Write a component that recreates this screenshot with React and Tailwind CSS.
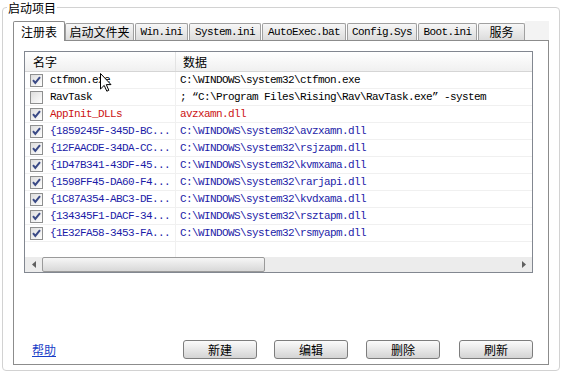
import React from 'react';

const mono = "font-['Liberation_Mono','Noto_Sans_CJK_SC',monospace] text-[11px] tracking-[-0.6px]";
const cjk = "font-['Noto_Sans_CJK_SC','Noto_Sans',sans-serif] text-[12px]";

const tabs = [
  { label: '注册表', w: 'w-[52px]', zh: true, active: true },
  { label: '启动文件夹', w: 'w-[69px]', zh: true },
  { label: 'Win.ini', w: 'w-[53px]' },
  { label: 'System.ini', w: 'w-[72px]' },
  { label: 'AutoExec.bat', w: 'w-[84px]' },
  { label: 'Config.Sys', w: 'w-[70px]' },
  { label: 'Boot.ini', w: 'w-[59px]' },
  { label: '服务', w: 'w-[47px]', zh: true },
];

const BLUE = 'text-[#1c1ca8]';
const RED = 'text-[#cc1414]';

const rows = [
  { on: true, name: 'ctfmon.exe', data: 'C:\\WINDOWS\\system32\\ctfmon.exe', color: 'text-black' },
  { on: false, name: 'RavTask', data: '; “C:\\Program Files\\Rising\\Rav\\RavTask.exe” -system', color: 'text-black' },
  { on: true, name: 'AppInit_DLLs', data: 'avzxamn.dll', color: RED },
  { on: true, name: '{1859245F-345D-BC...', data: 'C:\\WINDOWS\\system32\\avzxamn.dll', color: BLUE },
  { on: true, name: '{12FAACDE-34DA-CC...', data: 'C:\\WINDOWS\\system32\\rsjzapm.dll', color: BLUE },
  { on: true, name: '{1D47B341-43DF-45...', data: 'C:\\WINDOWS\\system32\\kvmxama.dll', color: BLUE },
  { on: true, name: '{1598FF45-DA60-F4...', data: 'C:\\WINDOWS\\system32\\rarjapi.dll', color: BLUE },
  { on: true, name: '{1C87A354-ABC3-DE...', data: 'C:\\WINDOWS\\system32\\kvdxama.dll', color: BLUE },
  { on: true, name: '{134345F1-DACF-34...', data: 'C:\\WINDOWS\\system32\\rsztapm.dll', color: BLUE },
  { on: true, name: '{1E32FA58-3453-FA...', data: 'C:\\WINDOWS\\system32\\rsmyapm.dll', color: BLUE },
];

function CheckBox({ on }) {
  return (
    <svg width="13" height="13" viewBox="0 0 13 13" className="shrink-0">
      <defs>
        <linearGradient id="cbg" x1="0" y1="0" x2="1" y2="1">
          <stop offset="0" stopColor="#dcdcdc" />
          <stop offset="1" stopColor="#ffffff" />
        </linearGradient>
      </defs>
      <rect x="0.5" y="0.5" width="12" height="12" fill="url(#cbg)" stroke="#8e8f8f" />
      {on && <path d="M3 6.2 L5.3 9 L10 3.2" fill="none" stroke="#3a4a86" strokeWidth="2" />}
    </svg>
  );
}

function Button({ children, className }) {
  return (
    <button className={`w-[74px] h-[19px] border border-[#7d7d7d] rounded-[3px] bg-linear-to-b from-[#fbfbfb] to-[#d4d4d4] text-black leading-[17px] ${cjk} ${className}`}>
      {children}
    </button>
  );
}

export default function App() {
  return (
    <div className="relative w-[563px] h-[375px] bg-white overflow-hidden px-[2px] pt-[1px]">
      <fieldset className="w-[558px] h-[370px] border border-[#d2d2d2] rounded-[4px] p-0 m-0">
        <legend className={`ml-[4px] px-[1px] leading-[13px] text-black ${cjk}`}>启动项目</legend>

        <div className="pl-[10px] pt-[7px]">
          {/* tab strip */}
          <div className="flex items-end h-[19px] w-[536px]">
            {tabs.map((t, i) => (
              <div
                key={t.label}
                className={`${t.w} shrink-0 flex items-center justify-center border border-b-0 rounded-t-[2px] text-black whitespace-nowrap ${
                  t.zh ? cjk : mono
                } ${
                  t.active
                    ? 'relative z-10 h-[20px] -mb-px bg-white border-[#8c8c8c]'
                    : 'h-[17px] bg-linear-to-b from-[#f7f7f7] to-[#dcdcdc] border-[#a0a0a0]'
                } ${i > 1 ? 'ml-[1px]' : ''}`}
              >
                {t.label}
              </div>
            ))}
            <div className="flex-1 h-[19px] bg-[#f3f3f3]" />
          </div>

          {/* tab panel */}
          <div className="w-[536px] h-[325px] border border-[#8c8c8c] bg-white flex flex-col pl-[10px] pt-[10px]">
            {/* list view */}
            <div className="w-[509px] h-[222px] border border-[#828790] flex flex-col bg-white">
              <div className={`flex h-[20px] border-b border-[#d5d5d5] bg-linear-to-b from-white to-[#f0f0f0] ${cjk} text-black`}>
                <div className="w-[151px] border-r border-[#e3e3e3] pl-[8px] flex items-center">名字</div>
                <div className="flex-1 pl-[7px] flex items-center">数据</div>
              </div>

              {rows.map((r) => (
                <div key={r.name} className={`flex h-[17px] border-b border-[#f0f0f0] ${mono} ${r.color}`}>
                  <div className="w-[151px] shrink-0 border-r border-[#f0f0f0] pl-[5px] flex items-center overflow-hidden whitespace-nowrap">
                    <CheckBox on={r.on} />
                    <span className="ml-[7px]">{r.name}</span>
                  </div>
                  <div className="flex-1 pl-[4px] flex items-center overflow-hidden whitespace-nowrap">{r.data}</div>
                </div>
              ))}

              <div className="flex flex-1">
                <div className="w-[151px] border-r border-[#f0f0f0]" />
              </div>

              {/* horizontal scrollbar */}
              <div className="flex h-[15px] bg-[#ececec]">
                <div className="w-[17px] flex items-center justify-center">
                  <svg width="4" height="7" viewBox="0 0 4 7"><path d="M4 0 L0 3.5 L4 7 Z" fill="#606060" /></svg>
                </div>
                <div className="w-[223px] h-[15px] border border-[#9a9a9a] rounded-[2px] bg-linear-to-b from-[#f6f6f6] to-[#d8d8d8]" />
                <div className="flex-1" />
                <div className="w-[17px] flex items-center justify-center">
                  <svg width="4" height="7" viewBox="0 0 4 7"><path d="M0 0 L4 3.5 L0 7 Z" fill="#606060" /></svg>
                </div>
              </div>
            </div>

            <div className="flex-1" />

            {/* bottom buttons */}
            <div className="flex items-center mb-[5px] pr-[15px]">
              <a className={`ml-[8px] text-[#1a3fc7] underline ${cjk}`}>帮助</a>
              <div className="ml-auto flex">
                <Button>新建</Button>
                <Button className="ml-[17px]">编辑</Button>
                <Button className="ml-[18px]">删除</Button>
                <Button className="ml-[19px]">刷新</Button>
              </div>
            </div>
          </div>
        </div>
      </fieldset>

      {/* mouse pointer */}
      <svg className="absolute left-[100px] top-[73px]" width="12" height="19" viewBox="0 0 12 19">
        <path d="M0.5 0.5 L0.5 16 L4.2 12.4 L6.8 18.2 L8.8 17.3 L6.3 11.6 L11 11.6 Z" fill="#ffffff" stroke="#000000" strokeWidth="1" />
      </svg>
    </div>
  );
}
